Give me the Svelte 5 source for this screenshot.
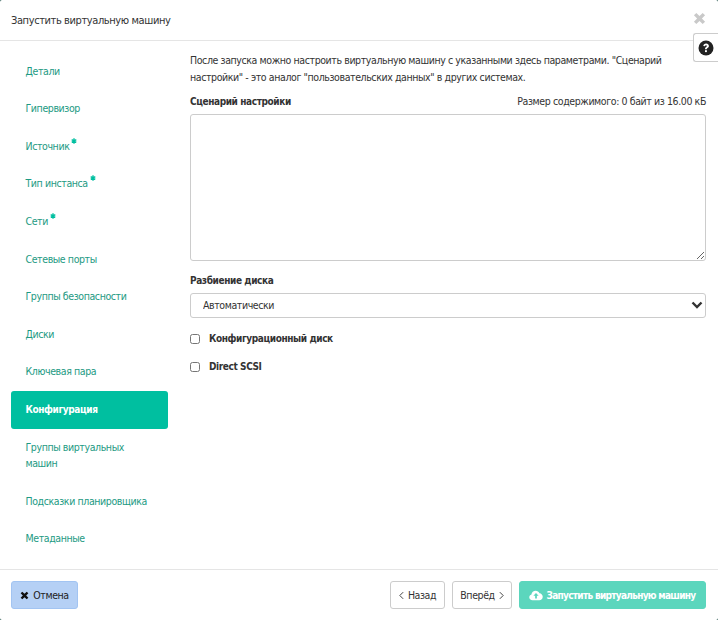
<script>
  const steps = [
    { label: 'Детали' },
    { label: 'Гипервизор' },
    { label: 'Источник', required: true },
    { label: 'Тип инстанса', required: true },
    { label: 'Сети', required: true },
    { label: 'Сетевые порты' },
    { label: 'Группы безопасности' },
    { label: 'Диски' },
    { label: 'Ключевая пара' },
    { label: 'Конфигурация', active: true },
    { label: 'Группы виртуальных машин' },
    { label: 'Подсказки планировщика' },
    { label: 'Метаданные' }
  ];
</script>

<div class="modal">
  <header class="modal-header">
    <h4>Запустить виртуальную машину</h4>
    <button class="close" aria-label="Закрыть">
      <svg viewBox="0 0 14 14" width="13" height="13"><path d="M1 3.600 3.600 1 7 4.400 10.400 1 13 3.600 9.600 7 13 10.400 10.400 13 7 9.600 3.600 13 1 10.400 4.400 7 1 3.600Z" fill="#c9c9c9"/></svg>
    </button>
  </header>

  <button class="help" aria-label="Помощь">
    <svg viewBox="0 0 16 16" width="16" height="16"><circle cx="8" cy="8" r="7.500" fill="#222"/><path d="M5.300 6.100C5.400 4.400 6.600 3.500 8.100 3.500c1.600 0 2.800 1 2.800 2.400 0 1.200-.7 1.700-1.400 2.200-.5.3-.7.5-.7 1.100H7c0-1.200.4-1.700 1.100-2.200.5-.3.8-.6.8-1 0-.5-.4-.8-.9-.8-.6 0-.9.4-1 1Z" fill="#fff"/><rect x="7" y="10.200" width="1.900" height="1.900" fill="#fff"/></svg>
  </button>

  <div class="modal-body">
    <nav class="steps">
      {#each steps as step}
        <a href="#top" class="step" class:active={step.active}>
          <span>{step.label}</span>{#if step.required}<svg class="req" viewBox="0 0 8 8" width="6" height="6"><path d="M4 .4v7.200M.9 2.200l6.200 3.600M7.100 2.200.9 5.800" stroke="#00bfa0" stroke-width="1.800" fill="none"/></svg>{/if}
        </a>
      {/each}
    </nav>

    <section class="pane">
      <p class="intro">После запуска можно настроить виртуальную машину с указанными здесь параметрами. "Сценарий настройки" - это аналог "пользовательских данных" в других системах.</p>

      <div class="label-row">
        <label for="script">Сценарий настройки</label>
        <span>Размер содержимого: 0 байт из 16.00 кБ</span>
      </div>
      <textarea id="script"></textarea>

      <label class="select-label" for="disk">Разбиение диска</label>
      <div class="select-wrap">
        <select id="disk"><option>Автоматически</option></select>
        <svg viewBox="0 0 12 8" width="12" height="8"><path d="M1.500 1.500 6 6l4.500-4.500" fill="none" stroke="#333" stroke-width="2.400"/></svg>
      </div>

      <label class="check first"><input type="checkbox" /> Конфигурационный диск</label>
      <label class="check"><input type="checkbox" /> Direct SCSI</label>
    </section>
  </div>

  <footer class="modal-footer">
    <button class="btn cancel">
      <svg viewBox="0 0 14 14" width="9" height="9"><path d="M1 3.600 3.600 1 7 4.400 10.400 1 13 3.600 9.600 7 13 10.400 10.400 13 7 9.600 3.600 13 1 10.400 4.400 7 1 3.600Z" fill="#111"/></svg>
      Отмена
    </button>
    <div class="nav-buttons">
      <button class="btn plain back"><svg viewBox="0 0 6 10" width="5" height="9"><path d="M5 1 1 5l4 4" fill="none" stroke="#444" stroke-width="1.200"/></svg> Назад</button>
      <button class="btn plain next">Вперёд <svg viewBox="0 0 6 10" width="5" height="9"><path d="M1 1l4 4-4 4" fill="none" stroke="#444" stroke-width="1.200"/></svg></button>
      <button class="btn launch">
        <svg viewBox="0 0 16 12" width="14" height="11"><path d="M4 11.500C1.800 11.500.3 10 .3 8.100c0-1.600 1-2.900 2.500-3.300C3 2.400 5 .5 7.600.5c2 0 3.700 1.100 4.400 2.900 2.100.2 3.700 1.900 3.700 4 0 2.300-1.800 4.100-4.100 4.100Z" fill="#fff"/><path d="M8 3.200 11 6.400H9V9.500H7V6.400H5Z" fill="#5bd6bd"/></svg>
        Запустить виртуальную машину
      </button>
    </div>
  </footer>
</div>

<style>
  :global(body) {
    margin: 0;
    background: #2a5a52;
  }
  .modal {
    position: relative;
    width: 718px;
    height: 620px;
    display: flex;
    flex-direction: column;
    font-family: "DejaVu Sans Condensed", "DejaVu Sans", sans-serif;
    font-stretch: condensed;
    font-size: 10.5px;
    letter-spacing: -0.4px;
    color: #333;
    background: #fff;
    border-radius: 2px;
  }
  .modal-header {
    height: 41px;
    box-sizing: border-box;
    flex: none;
    display: flex;
    align-items: center;
    justify-content: space-between;
    padding: 0 12px 0 11px;
    border-bottom: 1px solid #e5e5e5;
  }
  h4 {
    margin: 0;
    font-size: 11px;
    font-weight: 400;
    color: #333;
  }
  .close {
    background: none;
    border: 0;
    padding: 0;
    height: 13px;
    margin-top: -4px;
  }
  .help {
    position: absolute;
    top: 33px;
    right: 0;
    width: 25px;
    height: 29px;
    box-sizing: border-box;
    background: #fff;
    border: 1px solid #ccc;
    border-right: 0;
    border-radius: 3px 0 0 3px;
    padding: 0;
    display: flex;
    align-items: center;
    justify-content: center;
  }
  .modal-body {
    flex: 1;
    display: flex;
    min-height: 0;
  }
  .steps {
    width: 157px;
    margin-left: 11px;
    padding-top: 11.6px;
    flex: none;
  }
  .step {
    display: block;
    padding: 10px 14.5px 11px;
    line-height: 16.6px;
    color: #1d9a83;
    text-decoration: none;
    border-radius: 3px;
  }
  .step.active {
    padding: 11px 14.5px 10px;
    background: #00bfa0;
    color: #fff;
    font-weight: 700;
    font-size: 10px;
  }
  .req {
    margin-left: 2px;
    vertical-align: 6px;
  }
  .pane {
    flex: 1;
    padding: 11px 12px 0 22px;
    min-width: 0;
  }
  .intro {
    margin: 0;
    line-height: 17px;
  }
  .label-row {
    display: flex;
    justify-content: space-between;
    align-items: flex-start;
    margin-top: 7px;
    line-height: 16px;
  }
  .label-row label {
    margin-top: 1px;
  }
  label {
    font-weight: 700;
    font-size: 10px;
  }
  textarea {
    display: block;
    width: 100%;
    height: 147px;
    box-sizing: border-box;
    margin: 4px 0 0;
    border: 1px solid #ccc;
    border-radius: 3px;
    background: #fff;
  }
  .select-label {
    display: block;
    margin-top: 12px;
    line-height: 16px;
  }
  .select-wrap {
    position: relative;
    margin-top: 4px;
  }
  .select-wrap svg {
    position: absolute;
    right: 3px;
    top: 8px;
  }
  select {
    display: block;
    width: 100%;
    height: 25px;
    box-sizing: border-box;
    padding: 0 12px 1px;
    appearance: none;
    border: 1px solid #ccc;
    border-radius: 3px;
    background: #fff;
    font: inherit;
    letter-spacing: inherit;
    color: #333;
  }
  .check {
    display: flex;
    align-items: center;
    gap: 9px;
    margin-top: 12px;
    line-height: 16px;
  }
  .check.first {
    margin-top: 13px;
  }
  .check input {
    width: 10px;
    height: 10px;
    margin: 0;
  }
  .modal-footer {
    height: 51px;
    flex: none;
    box-sizing: border-box;
    border-top: 1px solid #e5e5e5;
    padding: 11px 12px 0 11px;
    display: flex;
    justify-content: space-between;
    align-items: flex-start;
  }
  .nav-buttons {
    display: flex;
    gap: 7px;
  }
  .btn {
    height: 28px;
    box-sizing: border-box;
    border-radius: 3px;
    font: inherit;
    letter-spacing: inherit;
    display: flex;
    align-items: center;
    gap: 4px;
    justify-content: center;
    white-space: nowrap;
    padding: 0;
  }
  .btn svg {
    flex: none;
  }
  .cancel {
    width: 67px;
    background: #b5d0f5;
    border: 1px solid #a2c4f2;
    color: #222;
  }
  .plain {
    background: #fff;
    border: 1px solid #ccc;
    color: #333;
  }
  .back {
    width: 55px;
  }
  .next {
    width: 60px;
  }
  .launch {
    width: 187px;
    background: #5bd6bd;
    border: 1px solid #5bd6bd;
    color: #fff;
    font-weight: 700;
    font-size: 10px;
    letter-spacing: -0.7px;
    gap: 3px;
  }
</style>
